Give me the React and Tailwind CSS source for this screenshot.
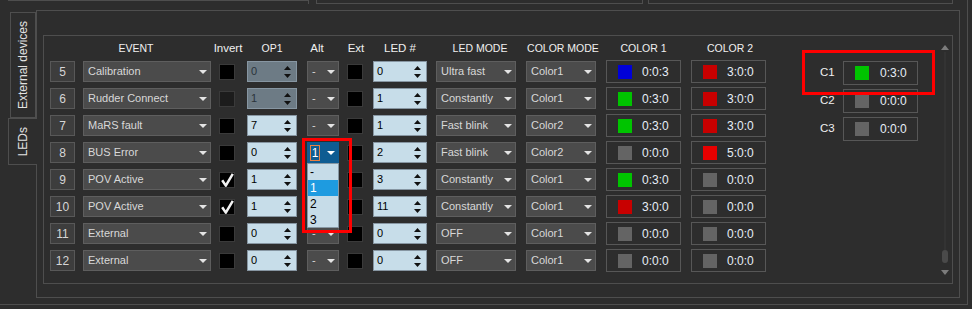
const rows = [
  { n: 5, ev: 'Calibration', inv: 'off', op: '0', opDis: true, alt: '-', led: '0', mode: 'Ultra fast', cm: 'Color1', c1: ['#0000d8', '0:0:3'], c2: ['#c80000', '3:0:0'] },
  { n: 6, ev: 'Rudder Connect', inv: 'dis', op: '1', opDis: true, alt: '-', led: '1', mode: 'Constantly', cm: 'Color1', c1: ['#00c400', '0:3:0'], c2: ['#c80000', '3:0:0'] },
  { n: 7, ev: 'MaRS fault', inv: 'off', op: '7', alt: '-', led: '1', mode: 'Fast blink', cm: 'Color2', c1: ['#00c400', '0:3:0'], c2: ['#c80000', '3:0:0'] },
  { n: 8, ev: 'BUS Error', inv: 'off', op: '0', alt: 'open', led: '2', mode: 'Fast blink', cm: 'Color2', c1: ['#646464', '0:0:0'], c2: ['#e80000', '5:0:0'] },
  { n: 9, ev: 'POV Active', inv: 'on', op: '1', alt: '', led: '3', mode: 'Constantly', cm: 'Color1', c1: ['#00c400', '0:3:0'], c2: ['#646464', '0:0:0'] },
  { n: 10, ev: 'POV Active', inv: 'on', op: '1', alt: '', led: '11', mode: 'Constantly', cm: 'Color1', c1: ['#c80000', '3:0:0'], c2: ['#646464', '0:0:0'] },
  { n: 11, ev: 'External', inv: 'off', op: '0', alt: '-', led: '0', mode: 'OFF', cm: 'Color1', c1: ['#646464', '0:0:0'], c2: ['#646464', '0:0:0'] },
  { n: 12, ev: 'External', inv: 'off', op: '0', alt: '-', led: '0', mode: 'OFF', cm: 'Color1', c1: ['#646464', '0:0:0'], c2: ['#646464', '0:0:0'] },
]

const cvals = [['C1', '#00c400', '0:3:0'], ['C2', '#646464', '0:0:0'], ['C3', '#646464', '0:0:0']]

function Arrow({ color = '#e4e4e4' }) {
  return (
    <svg width="8" height="4" viewBox="0 0 8 4" className="shrink-0">
      <polygon points="0,0 8,0 4,4" fill={color} />
    </svg>
  )
}

function Combo({ text, className }) {
  return (
    <div className={`flex h-[21px] items-center border border-[#5e5e5e] bg-[#4b4b4b] pl-[4px] pr-[3px] text-[#d8d8d8] ${className}`}>
      <span className="flex-1 whitespace-nowrap">{text}</span>
      <Arrow />
    </div>
  )
}

function Spin({ value, disabled, className }) {
  return (
    <div className={`flex h-[21px] items-center border border-[#8796a2] pl-[3px] pr-[5px] ${disabled ? 'bg-[#6d7b85] text-[#2b343b]' : 'bg-[#c7dde9] text-black'} ${className}`}>
      <span className="flex-1">{value}</span>
      <svg width="7" height="12" viewBox="0 0 7 12">
        <polygon points="0,4 3.5,0 7,4" fill="#111" />
        <polygon points="0,8 7,8 3.5,12" fill="#111" />
      </svg>
    </div>
  )
}

function Check({ state }) {
  return (
    <div className={`h-[16px] w-[16px] border border-[#3a3a3a] ${state === 'dis' ? 'bg-[#1c1c1c]' : 'bg-black'}`}>
      {state === 'on' && (
        <svg width="14" height="14" viewBox="0 0 14 14">
          <path d="M2.2 7.2 L5.8 12.6 L12.8 0.8" stroke="#f2f2f2" strokeWidth="2.5" fill="none" strokeLinejoin="round" />
        </svg>
      )}
    </div>
  )
}

function ColorBox({ c }) {
  return (
    <div className="flex h-[23px] w-[75px] items-center self-center border border-[#575757] pl-[11px] text-[12px] text-[#e6edf8]">
      <div className="h-[14px] w-[14px]" style={{ background: c[0] }} />
      <span className="ml-[10px]">{c[1]}</span>
    </div>
  )
}

function AltOpen() {
  return (
    <div className="relative">
      <div className="flex h-[21px] w-[32px] items-center bg-[#0e5c92] pl-[3px] pr-[4px] text-white">
        <span className="flex h-[16px] w-[10px] items-center justify-center border border-[#e88042] text-[12px]">1</span>
        <span className="flex-1" />
        <Arrow color="#ffffff" />
      </div>
      <div className="absolute left-0 top-[21px] h-[65px] w-[32px] border border-[#8697a3] bg-[#c6dce8] text-[12px] text-black">
        <div className="h-[16px] pl-[2px] leading-[16px]">-</div>
        <div className="h-[16px] bg-[#1e9be0] pl-[2px] leading-[16px] text-white">1</div>
        <div className="h-[16px] pl-[2px] leading-[16px]">2</div>
        <div className="h-[16px] pl-[2px] leading-[16px]">3</div>
      </div>
      <div className="absolute left-[-5px] top-[-4px] h-[95px] w-[50px] border-[3px] border-[#ff0000]" />
    </div>
  )
}

function Row({ r }) {
  return (
    <div className="flex h-[21px] items-center">
      <div className="w-[33px]">
        <div className="flex h-[21px] w-[25px] items-center justify-center border border-[#585858] bg-[#3d3d3d] text-[12px] text-[#d6d6d6]">{r.n}</div>
      </div>
      <div className="w-[136px]"><Combo text={r.ev} className="w-[128px]" /></div>
      <div className="w-[28px]"><Check state={r.inv} /></div>
      <div className="w-[60px]"><Spin value={r.op} disabled={r.opDis} className="w-[50px]" /></div>
      <div className="w-[40px]">
        {r.alt === 'open' ? <AltOpen /> : <Combo text={r.alt} className="w-[32px]" />}
      </div>
      <div className="w-[26px]"><Check state="off" /></div>
      <div className="w-[63px]"><Spin value={r.led} className="w-[54px]" /></div>
      <div className="w-[90px]"><Combo text={r.mode} className="w-[80px]" /></div>
      <div className="w-[80px]"><Combo text={r.cm} className="w-[70px]" /></div>
      <div className="flex h-[21px] w-[85px] items-center"><ColorBox c={r.c1} /></div>
      <div className="flex h-[21px] w-[75px] items-center"><ColorBox c={r.c2} /></div>
    </div>
  )
}

function Head({ w, inner, text, small }) {
  return (
    <div className={w}>
      <div className={`flex justify-center whitespace-nowrap ${inner} ${small ? 'text-[10.5px]' : 'text-[11.5px]'}`}>{text}</div>
    </div>
  )
}

export default function App() {
  return (
    <div className="h-[309px] w-[972px] overflow-hidden bg-[#2d2d2d] font-['Liberation_Sans',Arial,sans-serif] text-[11px] leading-none">
      <div className="flex h-[305px] w-[968px] flex-col border-b border-r border-[#4e4e4e]">
        <div className="flex h-[10px] shrink-0 items-start">
          <div className="ml-[8px] h-[4px] w-[301px] border-r border-t border-[#4e4e4e]" />
          <div className="ml-[7px] h-[4px] w-[327px] border-x border-b border-[#4e4e4e]" />
          <div className="ml-[5px] h-[4px] w-[305px] border-x border-b border-[#4e4e4e]" />
        </div>

        <div className="flex h-[288px] shrink-0">
          <div className="flex w-[36px] shrink-0 flex-col items-start text-[12px] text-[#e2e2e2]">
            <div className="ml-[10px] mt-[2px] flex h-[106px] w-[26px] items-center justify-center border border-[#4e4e4e]">
              <span className="rotate-180 whitespace-nowrap [writing-mode:vertical-rl]">External devices</span>
            </div>
            <div className="relative z-10 ml-[8px] flex h-[47px] w-[29px] shrink-0 items-center justify-center border-y border-l border-[#4e4e4e] bg-[#2d2d2d]">
              <span className="rotate-180 whitespace-nowrap [writing-mode:vertical-rl]">LEDs</span>
            </div>
          </div>

          <div className="h-[288px] w-[924px] shrink-0 border border-[#4e4e4e]">
            <div className="ml-[6px] mt-[24px] flex h-[249px] w-[910px] border border-[#4e4e4e]">
              <div className="flex flex-col pl-[6px] pt-[5px]">
                <div className="flex h-[15px] items-center text-[#f0f0f0]">
                  <Head w="w-[33px]" />
                  <Head w="w-[136px]" inner="w-[106px]" text="EVENT" small />
                  <Head w="w-[28px]" inner="w-[18px]" text="Invert" />
                  <Head w="w-[60px]" inner="w-[50px]" text="OP1" small />
                  <Head w="w-[40px]" inner="w-[20px]" text="Alt" />
                  <Head w="w-[26px]" inner="w-[18px]" text="Ext" />
                  <Head w="w-[63px]" inner="w-[54px]" text="LED #" />
                  <Head w="w-[90px]" inner="w-[88px]" text="LED MODE" small />
                  <Head w="w-[80px]" inner="w-[74px]" text="COLOR MODE" small />
                  <Head w="w-[85px]" inner="w-[75px]" text="COLOR 1" small />
                  <Head w="w-[75px]" inner="w-[78px]" text="COLOR 2" small />
                </div>
                <div className="mt-[5px] flex flex-col gap-[6px]">
                  {rows.map(r => <Row key={r.n} r={r} />)}
                </div>
              </div>

              <div className="relative ml-[54px] mt-[25px] flex flex-col gap-[4px] self-start">
                {cvals.map(c => (
                  <div key={c[0]} className="flex items-center">
                    <span className="w-[23px] text-[11.5px] text-[#f0f0f0]">{c[0]}</span>
                    <div className="flex h-[24px] w-[75px] items-center border border-[#575757] pl-[11px] text-[12px] text-[#e6edf8]">
                      <div className="h-[14px] w-[14px]" style={{ background: c[1] }} />
                      <span className="ml-[11px]">{c[2]}</span>
                    </div>
                  </div>
                ))}
                <div className="absolute left-[-18px] top-[-11px] h-[45px] w-[133px] border-[3px] border-[#ff0000]" />
              </div>

              <div className="flex-1" />

              <div className="mr-[3px] mt-[9px] flex h-[230px] w-[9px] flex-col items-center">
                <svg width="8" height="5" viewBox="0 0 8 5"><polygon points="0,5 4,0 8,5" fill="#7c7c7c" /></svg>
                <div className="mt-[2px] w-[2px] flex-1 bg-[#333333]" />
                <div className="h-[13px] w-[6px] rounded-full bg-[#4a4a4a]" />
                <div className="h-[7px]" />
                <svg width="8" height="5" viewBox="0 0 8 5"><polygon points="0,0 8,0 4,5" fill="#7c7c7c" /></svg>
              </div>
            </div>
          </div>
        </div>
      </div>
    </div>
  )
}
